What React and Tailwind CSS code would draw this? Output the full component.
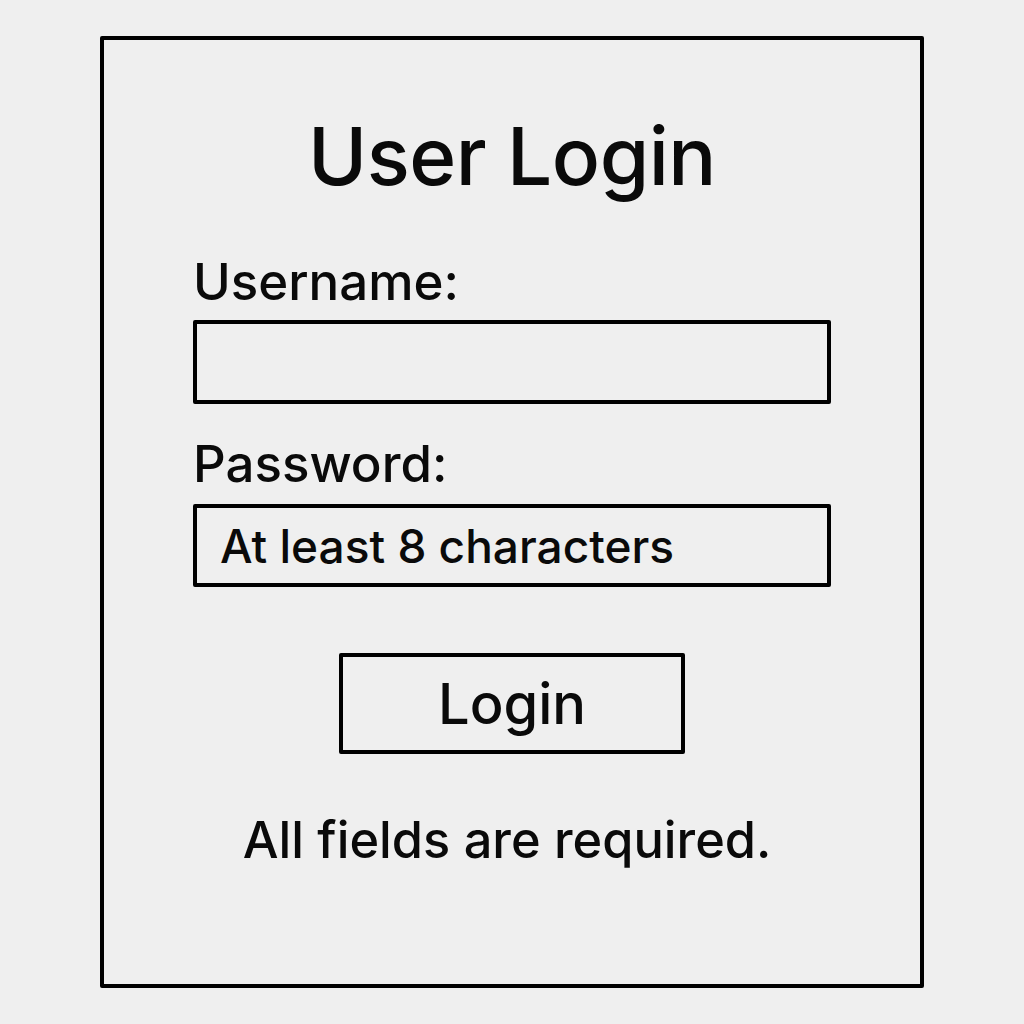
export default function App() {
  return (
    <div className="min-h-screen bg-[#efefef] pt-[36px] text-[#0a0a0a]" style={{ fontFamily: "Inter, 'Noto Sans', sans-serif" }}>
      <div className="mx-auto w-[824px] h-[952px] border-[4px] border-black rounded-[2px] px-[89px] pt-[76px] flex flex-col">
        <h1 className="text-center text-[80px] leading-none font-medium tracking-[-0.5px]">User Login</h1>

        <label className="mt-[60px] text-[51px] leading-none font-[450]">Username:</label>
        <input
          type="text"
          className="mt-[13px] h-[84px] w-full border-[4px] border-black rounded-[2px] bg-transparent px-[23px] text-[46px] outline-none"
        />

        <label className="mt-[34px] text-[51px] leading-none font-[450]">Password:</label>
        <input
          type="password"
          placeholder="At least 8 characters"
          className="mt-[15px] h-[83px] w-full border-[4px] border-black rounded-[2px] bg-transparent px-[23px] text-[46px] font-[450] outline-none placeholder:text-[#0a0a0a]"
        />

        <div className="mt-[66px] flex justify-center">
          <button className="w-[346px] h-[101px] border-[4px] border-black rounded-[2px] text-[56px] leading-none font-[450]">
            Login
          </button>
        </div>

        <p className="mt-[61px] pr-[10px] text-center text-[50.5px] leading-none font-[450]">All fields are required.</p>
      </div>
    </div>
  );
}
